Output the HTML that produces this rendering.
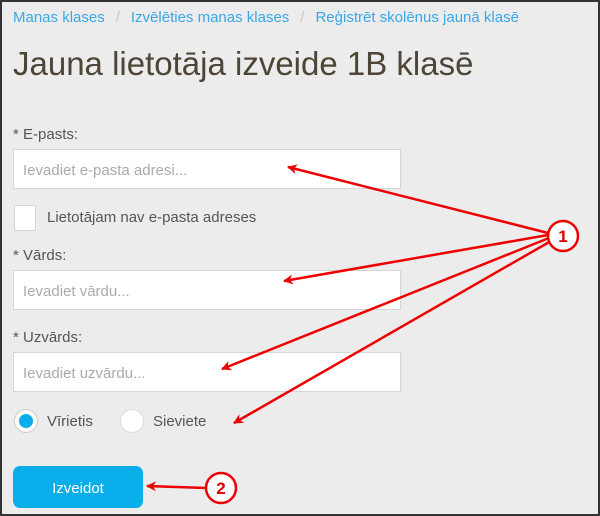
<!DOCTYPE html>
<html><head><meta charset="utf-8"><style>
body{margin:0;width:600px;height:516px;overflow:hidden;font-family:"Liberation Sans","DejaVu Sans",sans-serif}
.wrap{position:absolute;left:0;top:0;width:596px;height:512px;border:2px solid #333;background:#ececec}
.a{position:absolute;white-space:nowrap}
.bc{top:7px;left:11px;font-size:15px;color:#3aa7e6}
.bc span{color:#c8c8c8;margin:0 11px}
.t{top:43px;left:11px;font-size:33px;color:#4d4536}
.l{font-size:15px;color:#555}
.in{position:absolute;left:11px;width:388px;height:40px;background:#fff;border:1px solid #d6d6d6;box-sizing:border-box;font-size:15px;color:#aaa;padding:12px 0 0 9px}
.cb{position:absolute;left:12px;top:203px;width:20px;height:24px;background:#fff;border:1px solid #d6d6d6}
.r{position:absolute;width:22px;height:22px;border-radius:50%;background:#fff;border:1px solid #ddd}
.btn{position:absolute;left:11px;top:464px;width:130px;height:42px;border-radius:7px;background:#0aaeea;color:#fff;font-size:15px;text-align:center;line-height:46px}
</style></head><body><div class="wrap">
<div class="a bc">Manas klases<span>/</span>Izvēlēties manas klases<span>/</span>Reģistrēt skolēnus jaunā klasē</div>
<div class="a t">Jauna lietotāja izveide 1B klasē</div>
<div class="a l" style="left:11px;top:124px">* E-pasts:</div>
<div class="in" style="top:147px">Ievadiet e-pasta adresi...</div>
<div class="cb"></div>
<div class="a l" style="left:45px;top:207px">Lietotājam nav e-pasta adreses</div>
<div class="a l" style="left:11px;top:245px">* Vārds:</div>
<div class="in" style="top:268px">Ievadiet vārdu...</div>
<div class="a l" style="left:11px;top:327px">* Uzvārds:</div>
<div class="in" style="top:350px">Ievadiet uzvārdu...</div>
<div class="r" style="left:12px;top:407px;border-color:#ccc"><div style="position:absolute;left:4px;top:4px;width:14px;height:14px;border-radius:50%;background:#0aaeea"></div></div>
<div class="a l" style="left:45px;top:411px">Vīrietis</div>
<div class="r" style="left:118px;top:407px"></div>
<div class="a l" style="left:151px;top:411px">Sieviete</div>
<div class="btn">Izveidot</div>
<svg style="position:absolute;left:-2px;top:-2px" width="600" height="516">
<defs><marker id="m" markerWidth="10" markerHeight="10" refX="9" refY="5" orient="auto" markerUnits="userSpaceOnUse"><path d="M0,0 L10,5 L0,10 L3,5Z" fill="#e00"/></marker></defs>
<g stroke="#e00" stroke-width="2.5" fill="none">
<line x1="548" y1="233" x2="288" y2="167" marker-end="url(#m)"/>
<line x1="548" y1="235" x2="284" y2="281" marker-end="url(#m)"/>
<line x1="549" y1="238" x2="222" y2="369" marker-end="url(#m)"/>
<line x1="551" y1="241" x2="234" y2="423" marker-end="url(#m)"/>
<line x1="206" y1="488" x2="147" y2="486" marker-end="url(#m)"/>
<circle cx="563" cy="236" r="15" fill="#fff"/>
<circle cx="221" cy="488" r="15" fill="#fff"/>
</g>
<text x="563" y="242" font-size="17" font-weight="bold" fill="#d00" text-anchor="middle" font-family="Liberation Sans">1</text>
<text x="221" y="494" font-size="17" font-weight="bold" fill="#d00" text-anchor="middle" font-family="Liberation Sans">2</text>
</svg>
</div></body></html>
